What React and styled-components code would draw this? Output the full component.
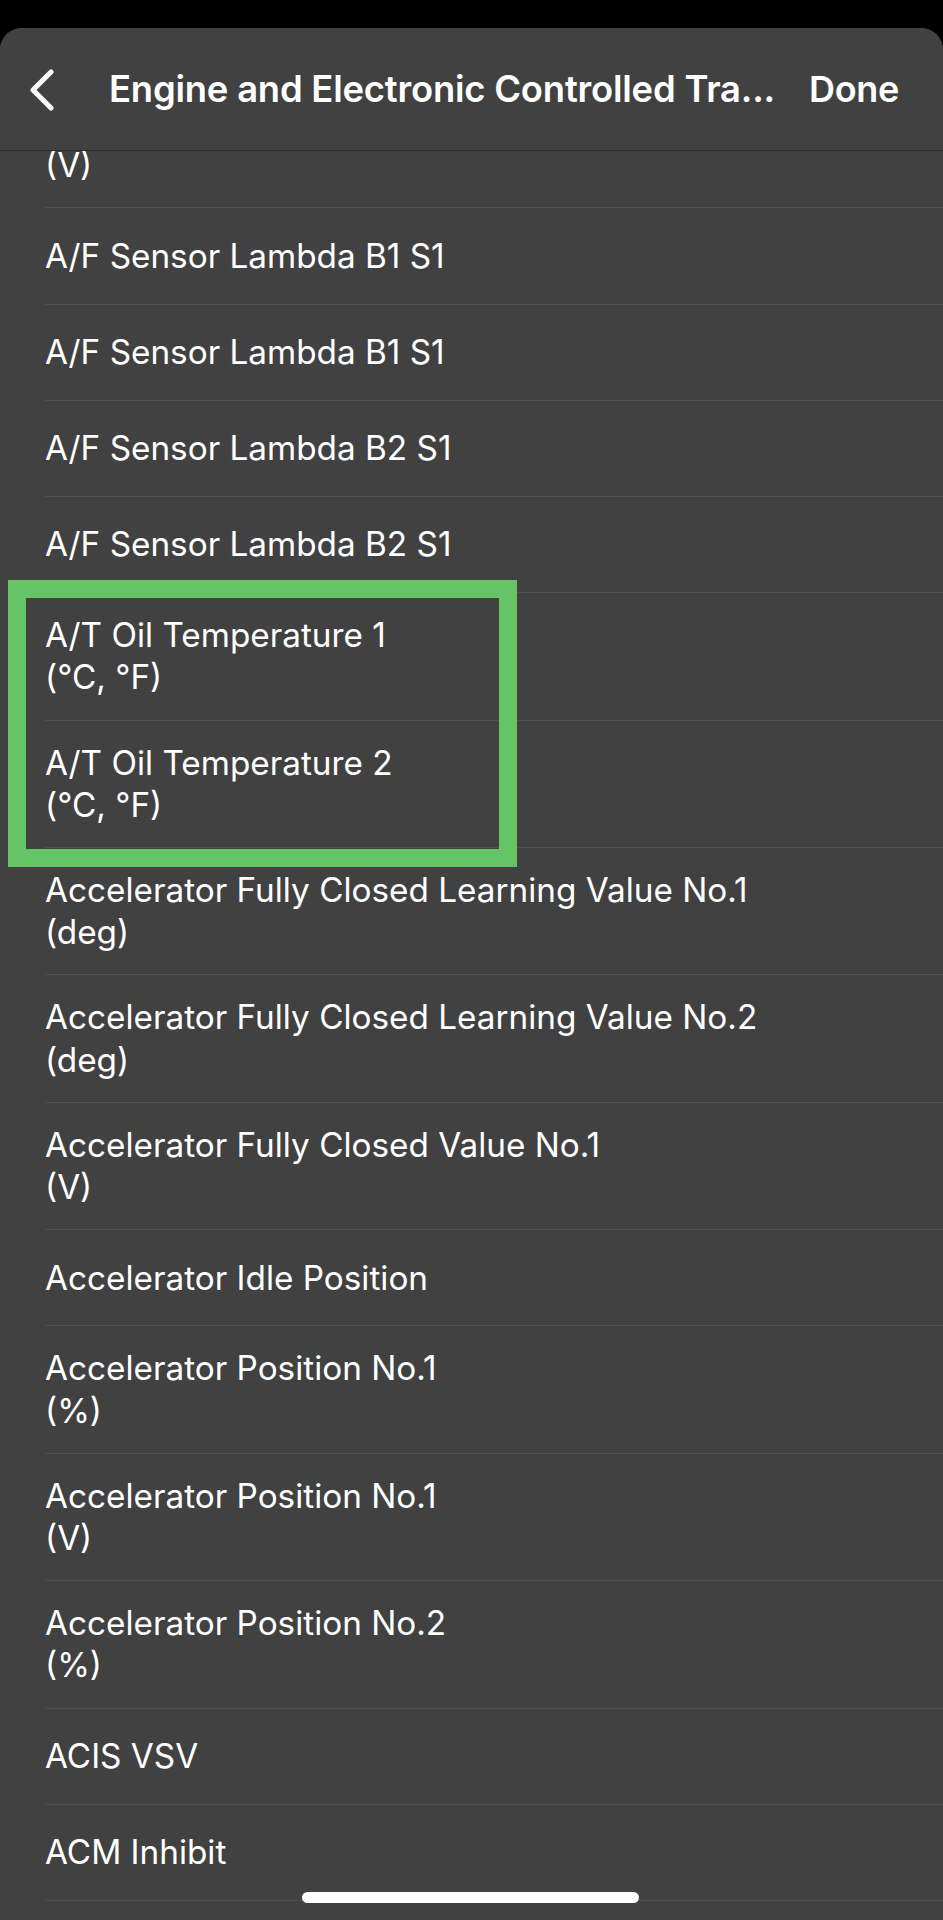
import React from "react";
import styled, { createGlobalStyle } from "styled-components";

const GlobalStyle = createGlobalStyle`
  html, body { margin: 0; padding: 0; background: #000; }
  * { box-sizing: border-box; }
  body { font-family: Inter, "Noto Sans", "Liberation Sans", sans-serif; -webkit-font-smoothing: antialiased; }
`;

const Screen = styled.div`
  width: 943px;
  height: 1920px;
  background: #000;
  padding-top: 28px;
  overflow: hidden;
`;

const Sheet = styled.div`
  position: relative;
  height: 100%;
  background: #414141;
  border-radius: 22px 22px 0 0;
  display: flex;
  flex-direction: column;
  overflow: hidden;
`;

const Header = styled.header`
  flex: 0 0 123px;
  display: flex;
  align-items: center;
  padding: 0 44px 0 28px;
  border-bottom: 1.5px solid #2e2e2e;
  background: #414141;
  color: #fff;
`;

const BackButton = styled.button`
  flex: 0 0 auto;
  width: 28px;
  height: 42px;
  padding: 0;
  border: 0;
  background: none;
  display: flex;
  align-items: center;
  justify-content: flex-start;
  margin-right: 53px;
  margin-top: 2px;
`;

const Title = styled.h1`
  flex: 1 1 auto;
  min-width: 0;
  margin: 0;
  font-size: 36.4px;
  font-weight: 600;
  letter-spacing: -0.2px;
  white-space: nowrap;
  overflow: hidden;
  text-overflow: ellipsis;
`;

const DoneButton = styled.button`
  flex: 0 0 auto;
  margin-left: 20px;
  padding: 0;
  border: 0;
  background: none;
  color: #fff;
  font-family: inherit;
  font-size: 36px;
  font-weight: 600;
  letter-spacing: -0.3px;
`;

const Viewport = styled.div`
  flex: 1 1 auto;
  overflow: hidden;
`;

const List = styled.ul`
  list-style: none;
  margin: -70px 0 0;
  padding: 0;
`;

const Row = styled.li`
  margin-left: 45px;
  min-height: 96.2px;
  padding: 21px 0;
  display: flex;
  align-items: center;
  border-bottom: 1px solid #505050;
  color: #fff;
  font-size: 33.3px;
  line-height: 42.2px;
  letter-spacing: 0;
`;

const Label = styled.div`
  display: flex;
  flex-direction: column;
`;

const Highlight = styled.div`
  position: absolute;
  left: 8px;
  top: 552px;
  width: 509px;
  height: 287px;
  border: 18px solid #64c466;
  pointer-events: none;
`;

const HomeIndicator = styled.div`
  position: absolute;
  left: 302px;
  top: 1864px;
  width: 337px;
  height: 11px;
  border-radius: 6px;
  background: #fff;
`;

const items = [
  ["+B", "(V)"],
  ["A/F Sensor Lambda B1 S1"],
  ["A/F Sensor Lambda B1 S1"],
  ["A/F Sensor Lambda B2 S1"],
  ["A/F Sensor Lambda B2 S1"],
  ["A/T Oil Temperature 1", "(°C, °F)"],
  ["A/T Oil Temperature 2", "(°C, °F)"],
  ["Accelerator Fully Closed Learning Value No.1", "(deg)"],
  ["Accelerator Fully Closed Learning Value No.2", "(deg)"],
  ["Accelerator Fully Closed Value No.1", "(V)"],
  ["Accelerator Idle Position"],
  ["Accelerator Position No.1", "(%)"],
  ["Accelerator Position No.1", "(V)"],
  ["Accelerator Position No.2", "(%)"],
  ["ACIS VSV"],
  ["ACM Inhibit"],
];

export default function App() {
  return (
    <Screen>
      <GlobalStyle />
      <Sheet>
        <Header>
          <BackButton aria-label="Back">
            <svg width="28" height="42" viewBox="0 0 28 42" fill="none">
              <path d="M23 3 L5 21 L23 39" stroke="#fff" strokeWidth="5" strokeLinecap="round" strokeLinejoin="round" />
            </svg>
          </BackButton>
          <Title>Engine and Electronic Controlled Tra...</Title>
          <DoneButton>Done</DoneButton>
        </Header>
        <Viewport>
          <List>
            {items.map((lines, i) => (
              <Row key={i}>
                <Label>
                  {lines.map((l, j) => (
                    <span key={j}>{l}</span>
                  ))}
                </Label>
              </Row>
            ))}
          </List>
        </Viewport>
        <Highlight />
        <HomeIndicator />
      </Sheet>
    </Screen>
  );
}
